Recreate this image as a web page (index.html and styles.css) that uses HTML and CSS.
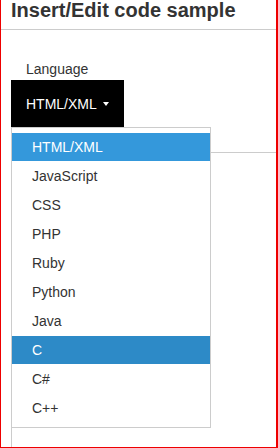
FILE: index.html
```html
<!DOCTYPE html>
<html lang="en">
<head>
  <meta charset="UTF-8" />
  <title>Insert/Edit code sample</title>
  <link rel="stylesheet" href="styles.css">
</head>
<body>
  <div class="dialog">
    <header class="dialog-head">Insert/Edit code sample</header>
    <div class="dialog-body">
      <label class="field-label">Language</label>
      <div class="picker">
        <button class="picker-btn">HTML/XML <span class="caret"></span></button>
        <ul class="menu">
          <li class="selected">HTML/XML</li>
          <li>JavaScript</li>
          <li>CSS</li>
          <li>PHP</li>
          <li>Ruby</li>
          <li>Python</li>
          <li>Java</li>
          <li class="active">C</li>
          <li>C#</li>
          <li>C++</li>
        </ul>
      </div>
      <div class="code-box"></div>
    </div>
  </div>
</body>
</html>
```

FILE: styles.css
```css
html, body {
  margin: 0;
  padding: 0;
  background: #fff;
}
body {
  font-family: "Liberation Sans", Arial, sans-serif;
  color: #333;
}
.dialog {
  box-sizing: border-box;
  width: 278px;
  height: 448px;
  border-left: 1px solid #e00;
  border-right: 2px solid #e00;
  border-bottom: 1px solid #e00;
  overflow: hidden;
}
.dialog-head {
  height: 29px;
  padding: 0 10px;
  font-size: 20px;
  line-height: 20px;
  font-weight: bold;
  color: #333;
  border-bottom: 1px solid #ccc;
}
.dialog-body {
  padding: 31px 0 0 10px;
}
.field-label {
  display: block;
  font-size: 14px;
  line-height: 16px;
  padding-left: 15px;
  margin-bottom: 3px;
}
.picker {
  position: relative;
}
.picker-btn {
  display: block;
  height: 47px;
  padding: 16px 15px 15px 15px;
  background: #000;
  color: #fff;
  border: none;
  font-family: inherit;
  font-size: 14px;
  line-height: 16px;
  cursor: pointer;
}
.caret {
  display: inline-block;
  width: 0;
  height: 0;
  margin-left: 3px;
  vertical-align: 3px;
  border-left: 3px solid transparent;
  border-right: 3px solid transparent;
  border-top: 4px solid #fff;
}
.menu {
  position: absolute;
  top: 47px;
  left: 0;
  z-index: 10;
  box-sizing: border-box;
  width: 200px;
  margin: 0;
  padding: 5px 0 4px;
  list-style: none;
  background: #fff;
  border: 1px solid #ccc;
}
.menu li {
  height: 28px;
  line-height: 28px;
  margin-bottom: 1px;
  padding-left: 20px;
  font-size: 14px;
  color: #333;
}
.menu li.selected {
  background: #3498db;
  color: #fff;
}
.menu li.active {
  background: #2d8ac7;
  color: #fff;
}
.code-box {
  margin-top: 25px;
  width: 400px;
  height: 400px;
  border: 1px solid #ccc;
}
```
